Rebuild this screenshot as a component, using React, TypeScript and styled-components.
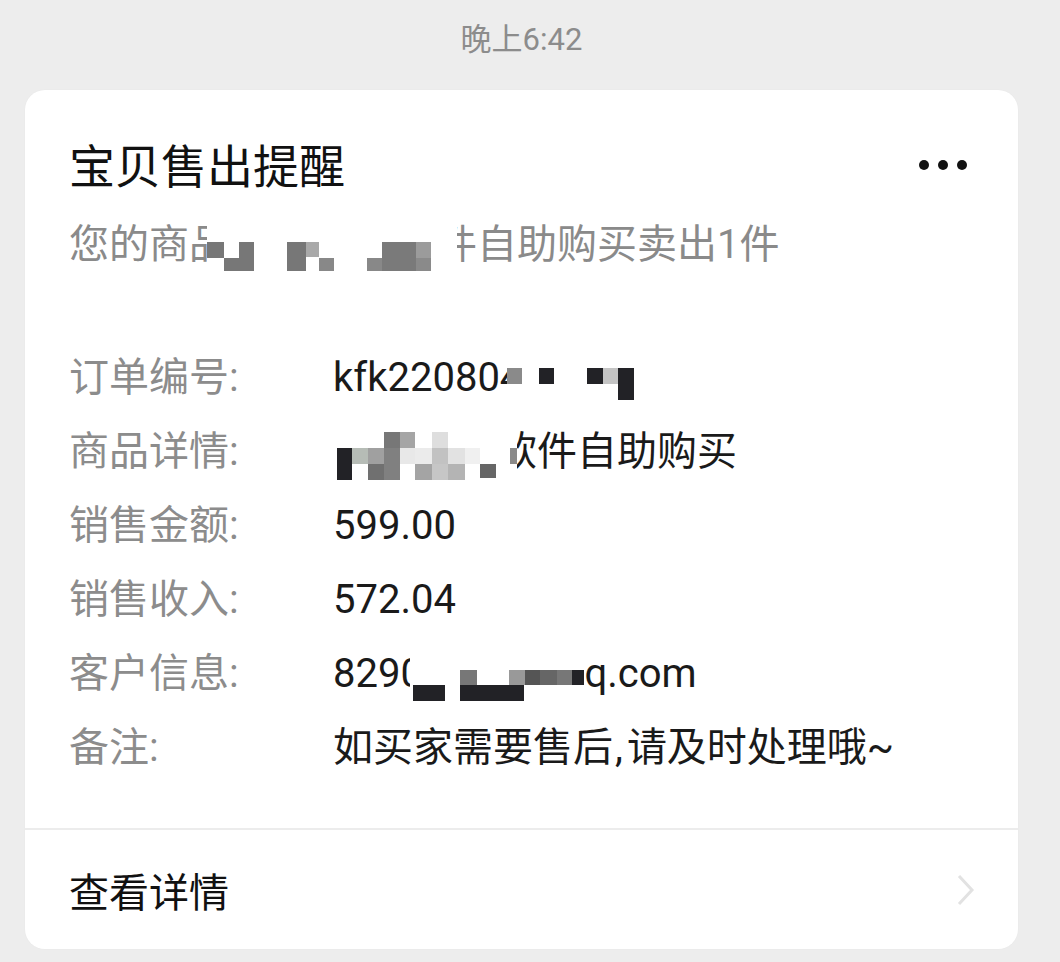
import React from "react";
import styled, { createGlobalStyle } from "styled-components";

const Global = createGlobalStyle`
  html, body { margin: 0; padding: 0; background: #ededed; }
  body { font-family: Roboto, "Noto Sans CJK SC", sans-serif; -webkit-font-smoothing: antialiased; }
`;

const Page = styled.div`
  width: 1060px;
  height: 962px;
  background: #ededed;
  overflow: hidden;
`;

const Column = styled.div`
  width: 993px;
  margin-left: 25px;
  display: flex;
  flex-direction: column;
`;

const Time = styled.div`
  height: 40px;
  margin-top: 20px;
  margin-bottom: 30px;
  line-height: 40px;
  text-align: center;
  font-size: 31px;
  color: #8c8c8c;
`;

const Card = styled.div`
  background: #ffffff;
  border-radius: 20px;
  box-shadow: 0 0 2px rgba(0, 0, 0, 0.03);
  display: flex;
  flex-direction: column;
`;

const Body = styled.div`
  padding: 49px 51px 43px 44px;
  display: flex;
  flex-direction: column;
`;

const Header = styled.div`
  display: flex;
  align-items: center;
  justify-content: space-between;
  height: 56px;
`;

const Title = styled.div`
  font-size: 46px;
  line-height: 56px;
  color: #111111;
`;

const Dots = styled.div`
  display: flex;
  gap: 9px;
  align-items: center;
  margin-top: -4px;
`;

const Dot = styled.span`
  width: 10px;
  height: 10px;
  border-radius: 50%;
  background: #111111;
`;

const Subtitle = styled.div`
  margin-top: 22px;
  height: 56px;
  display: flex;
  font-size: 40px;
  line-height: 56px;
  color: #8a8a8a;
  white-space: nowrap;
`;

const Rows = styled.div`
  margin-top: 68px;
  display: flex;
  flex-direction: column;
`;

const Row = styled.div`
  display: grid;
  grid-template-columns: 264px 1fr;
  height: 74px;
  line-height: 74px;
  font-size: 40px;
  white-space: nowrap;
`;

const Label = styled.div`
  color: #8c8c8c;
`;

const Value = styled.div`
  display: flex;
  color: #1a1a1a;
`;

const Comma = styled.span`
  margin: 0 4px 0 2px;
`;

const Clip = styled.span<{ $w: number; $shift: number }>`
  display: inline-block;
  width: ${(p) => p.$w}px;
  overflow: hidden;
  white-space: nowrap;
  & > span {
    display: inline-block;
    margin-left: -${(p) => p.$shift}px;
  }
`;

const MosaicSvg = styled.svg`
  display: block;
  flex: none;
`;

const Divider = styled.div`
  height: 2px;
  background: #ececec;
`;

const Footer = styled.div`
  height: 119px;
  padding: 0 42px 0 44px;
  display: flex;
  align-items: center;
  justify-content: space-between;
`;

const FooterText = styled.div`
  font-size: 40px;
  color: #111111;
`;

const Chevron = styled.svg`
  display: block;
`;

type Cell = [number, number, number, number, string];

const Mosaic = ({ w, h, cells }: { w: number; h: number; cells: Cell[] }) => (
  <MosaicSvg width={w} height={h} viewBox={`0 0 ${w} ${h}`}>
    {cells.map(([x, y, cw, ch, c], i) => (
      <rect key={i} x={x} y={y} width={cw} height={ch} fill={c} />
    ))}
  </MosaicSvg>
);

const subtitleCells: Cell[] = [
  [0, 25, 17, 16, "#777777"],
  [17, 41, 30, 13, "#777777"],
  [32, 25, 15, 16, "#777777"],
  [80, 25, 19, 29, "#777777"],
  [99, 25, 13, 15, "#a9a9a9"],
  [112, 41, 15, 13, "#888888"],
  [160, 41, 15, 13, "#888888"],
  [175, 25, 34, 29, "#7a7a7a"],
  [209, 25, 15, 16, "#9b9b9b"],
  [209, 41, 15, 13, "#8a8a8a"],
];

const orderCells: Cell[] = [
  [0, 27, 15, 16, "#8a8a8a"],
  [32, 27, 15, 16, "#222226"],
  [80, 27, 16, 16, "#222226"],
  [96, 27, 15, 16, "#c4c4c4"],
  [111, 27, 16, 32, "#222226"],
];

const goodsCells: Cell[] = [
  [51, 17, 16, 16, "#777777"],
  [67, 17, 15, 16, "#a5a5a5"],
  [99, 17, 16, 16, "#dedede"],
  [4, 33, 15, 32, "#222226"],
  [19, 33, 16, 16, "#b6bcb6"],
  [35, 33, 16, 16, "#a0a0a0"],
  [51, 33, 16, 16, "#808080"],
  [67, 33, 15, 16, "#e8e8e8"],
  [82, 33, 17, 16, "#ebebeb"],
  [99, 33, 16, 16, "#c2c2c2"],
  [115, 33, 17, 16, "#e2e2e2"],
  [132, 33, 15, 16, "#f0f0f0"],
  [35, 49, 16, 16, "#707070"],
  [51, 49, 16, 16, "#808080"],
  [82, 49, 17, 16, "#a4a4a4"],
  [99, 49, 16, 16, "#c6c6c6"],
  [115, 49, 17, 16, "#b4b4b4"],
  [147, 49, 16, 14, "#666666"],
  [177, 33, 7, 16, "#8a8a8a"],
];

const customerCells: Cell[] = [
  [50, 33, 17, 15, "#777777"],
  [99, 33, 16, 15, "#999999"],
  [115, 33, 15, 15, "#555555"],
  [130, 33, 17, 15, "#666666"],
  [147, 33, 15, 15, "#777777"],
  [162, 33, 12, 15, "#222226"],
  [3, 48, 32, 16, "#222226"],
  [50, 48, 64, 16, "#222226"],
];

export default function App() {
  return (
    <Page>
      <Global />
      <Column>
        <Time>晚上6:42</Time>
        <Card>
          <Body>
            <Header>
              <Title>宝贝售出提醒</Title>
              <Dots>
                <Dot />
                <Dot />
                <Dot />
              </Dots>
            </Header>
            <Subtitle>
              <span>您的商</span>
              <Clip $w={18} $shift={0}>
                <span>品</span>
              </Clip>
              <Mosaic w={250} h={56} cells={subtitleCells} />
              <Clip $w={20} $shift={20}>
                <span>件</span>
              </Clip>
              <span>自助购买卖出1件</span>
            </Subtitle>
            <Rows>
              <Row>
                <Label>订单编号:</Label>
                <Value>
                  <span>kfk22080</span>
                  <Clip $w={7} $shift={0}>
                    <span>4</span>
                  </Clip>
                  <Mosaic w={128} h={74} cells={orderCells} />
                </Value>
              </Row>
              <Row>
                <Label>商品详情:</Label>
                <Value>
                  <Mosaic w={184} h={74} cells={goodsCells} />
                  <Clip $w={20} $shift={20}>
                    <span>软</span>
                  </Clip>
                  <span>件自助购买</span>
                </Value>
              </Row>
              <Row>
                <Label>销售金额:</Label>
                <Value>599.00</Value>
              </Row>
              <Row>
                <Label>销售收入:</Label>
                <Value>572.04</Value>
              </Row>
              <Row>
                <Label>客户信息:</Label>
                <Value>
                  <span>829</span>
                  <Clip $w={10} $shift={0}>
                    <span>0</span>
                  </Clip>
                  <Mosaic w={174} h={74} cells={customerCells} />
                  <span>q.com</span>
                </Value>
              </Row>
              <Row>
                <Label>备注:</Label>
                <Value>
                  <span>如买家需要售后</span>
                  <Comma>,</Comma>
                  <span>请及时处理哦~</span>
                </Value>
              </Row>
            </Rows>
          </Body>
          <Divider />
          <Footer>
            <FooterText>查看详情</FooterText>
            <Chevron width="20" height="34" viewBox="0 0 20 34">
              <polyline
                points="3,3 16,17 3,31"
                fill="none"
                stroke="#e2e2e2"
                strokeWidth="3"
                strokeLinejoin="miter"
              />
            </Chevron>
          </Footer>
        </Card>
      </Column>
    </Page>
  );
}
